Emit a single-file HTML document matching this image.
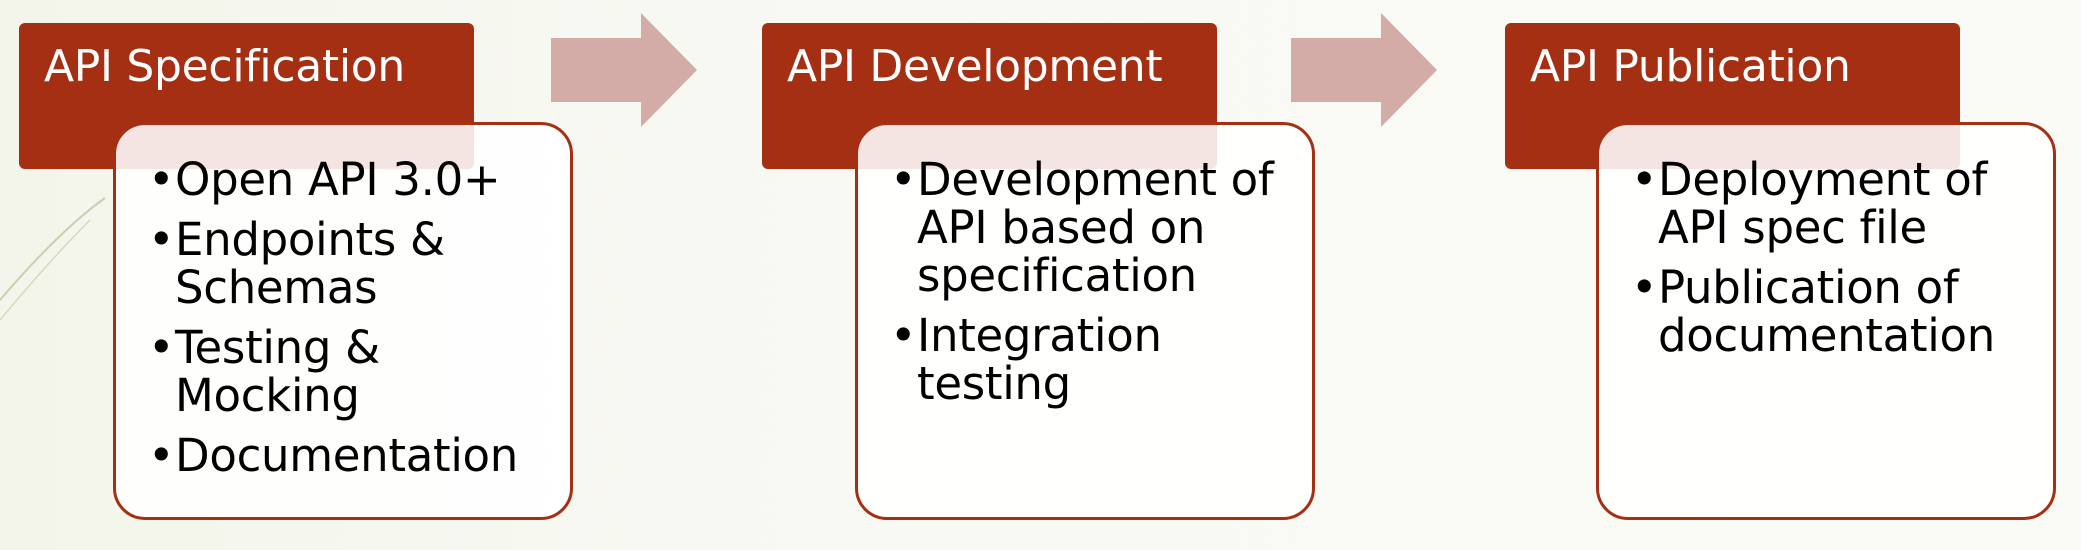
<!DOCTYPE html>
<html><head><meta charset="utf-8"><style>
html,body{margin:0;padding:0}
body{width:2081px;height:534px;position:relative;overflow:hidden;background:linear-gradient(90deg,#f3f5ea 0%,#f9f9f4 40%,#fafaf6 100%);font-family:"DejaVu Sans","Liberation Sans",sans-serif;}
.h{position:absolute;top:23px;height:146px;width:455px;background:#a52f12;color:#fff;font-size:44px;box-sizing:border-box;padding:18px 0 0 25px;letter-spacing:-0.3px;border-radius:6px}
.b{position:absolute;top:122px;height:398px;width:460px;background:rgba(255,255,255,0.88);border:3px solid #a52f12;border-radius:32px;box-sizing:border-box;padding:31px 6px 0 32px;font-size:45px;color:#000;line-height:48px;letter-spacing:-0.3px}
.b div{padding-left:27px;text-indent:-27px;margin-bottom:12px}
.b div::before{content:"•";display:inline-block;width:27px;text-indent:0}
svg{position:absolute}
</style></head><body>
<svg width="120" height="400" style="left:0;top:150px"><path d="M0 150 Q60 80 105 48" stroke="#c9cfb0" stroke-width="2" fill="none"/><path d="M0 170 Q50 110 90 70" stroke="#d5d9c0" stroke-width="1.5" fill="none"/></svg>
<div class="h" style="left:19px">API Specification</div>
<div class="b" style="left:113px"><div>Open API 3.0+</div><div>Endpoints &amp; Schemas</div><div>Testing &amp; Mocking</div><div>Documentation</div></div>
<svg width="150" height="120" style="left:551px;top:13px"><polygon points="0,25 90,25 90,0 146,57 90,114 90,89 0,89" fill="#d3aca7"/></svg>
<div class="h" style="left:762px">API Development</div>
<div class="b" style="left:855px"><div>Development of API based on specification</div><div>Integration testing</div></div>
<svg width="150" height="120" style="left:1291px;top:13px"><polygon points="0,25 90,25 90,0 146,57 90,114 90,89 0,89" fill="#d3aca7"/></svg>
<div class="h" style="left:1505px">API Publication</div>
<div class="b" style="left:1596px"><div>Deployment of API spec file</div><div>Publication of documentation</div></div>
</body></html>
